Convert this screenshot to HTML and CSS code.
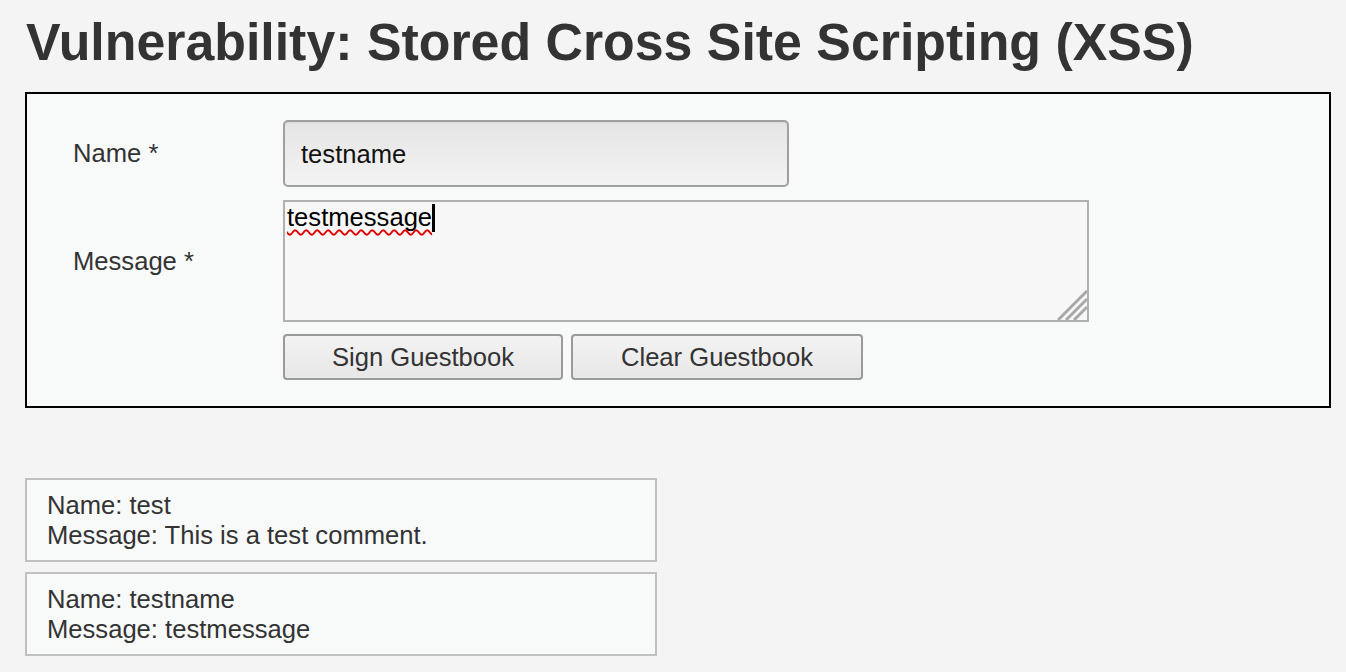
FILE: index.html
```html
<!DOCTYPE html>
<html lang="en">
<head>
<meta charset="utf-8">
<title>Vulnerability: Stored Cross Site Scripting (XSS)</title>
<link rel="stylesheet" href="styles.css">
</head>
<body>
<div class="page">
  <h1 class="title">Vulnerability: Stored Cross Site Scripting (XSS)</h1>
  <div class="code-area">
    <form class="guest-form">
      <label class="label">Name *</label>
      <div class="cell"><div class="text-input">testname</div></div>
      <label class="label">Message *</label>
      <div class="cell">
        <div class="textarea"><span class="typed">testmessage</span><span class="caret"></span>
          <svg class="grip" width="30" height="30" viewBox="0 0 30 30"><path d="M1 30 L30 1 M9 30 L30 9 M17 30 L30 17" stroke="#a8a8a8" stroke-width="3" fill="none"/></svg>
        </div>
      </div>
      <div></div>
      <div class="cell buttons">
        <button type="button" class="btn btn-sign">Sign Guestbook</button>
        <button type="button" class="btn btn-clear">Clear Guestbook</button>
      </div>
    </form>
  </div>
  <div class="entries">
    <div class="entry">Name: test<br>Message: This is a test comment.</div>
    <div class="entry">Name: testname<br>Message: testmessage</div>
  </div>
</div>
</body>
</html>
```
FILE: styles.css
```css
html, body {
  margin: 0;
  padding: 0;
  background: #f4f4f4;
}
body {
  font-family: "Liberation Sans", Arial, sans-serif;
  color: #333;
  font-size: 25.6px;
}
.page {
  padding: 12px 15px 0 25px;
}
.title {
  margin: 0 0 20px 0;
  font-size: 51.85px;
  line-height: 60px;
  font-weight: bold;
  color: #333;
  padding-left: 1px;
}
.code-area {
  border: 2px solid #000;
  background: #f8f9f9;
  padding: 26px 0 26px 46px;
}
.guest-form {
  display: grid;
  grid-template-columns: 210px auto;
  align-items: center;
  row-gap: 13px;
}
.label {
  font-size: 25.6px;
  color: #333;
}
.cell {
  display: flex;
}
.text-input {
  box-sizing: border-box;
  width: 506px;
  height: 67px;
  border: 2px solid #a0a0a0;
  border-radius: 5px;
  background: linear-gradient(to bottom, #e5e5e5, #f3f3f3);
  color: #111;
  padding: 1px 16px 0 16px;
  display: flex;
  align-items: center;
  box-shadow: inset 0 1px 2px rgba(0,0,0,0.06);
}
.textarea {
  position: relative;
  box-sizing: border-box;
  width: 806px;
  height: 122px;
  border: 2px solid #b0b0b0;
  background: #f7f7f7;
  color: #000;
  padding: 1px 2px;
  line-height: 29px;
}
.typed {
  text-decoration: underline wavy #e00000;
  text-decoration-skip-ink: none;
  text-underline-offset: 3px;
  text-decoration-thickness: 1.5px;
}
.caret {
  display: inline-block;
  width: 3px;
  height: 28px;
  background: #000;
  vertical-align: -6px;
}
.grip {
  position: absolute;
  right: 0;
  bottom: 0;
  display: block;
}
.buttons {
  gap: 8px;
  margin-top: -1px;
}
.btn {
  box-sizing: border-box;
  height: 46px;
  padding: 0;
  text-align: center;
  font-family: "Liberation Sans", Arial, sans-serif;
  font-size: 25.6px;
  color: #333;
  border: 2px solid #9a9a9a;
  border-radius: 4px;
  background: linear-gradient(to bottom, #f3f3f3, #e7e7e7);
  cursor: pointer;
}
.btn-sign {
  width: 280px;
}
.btn-clear {
  width: 292px;
}
.entries {
  margin-top: 70px;
  display: flex;
  flex-direction: column;
  gap: 10px;
}
.entry {
  box-sizing: border-box;
  width: 632px;
  border: 2px solid #c0c0c0;
  background: #f8f9f9;
  padding: 10px 20px 10px 20px;
  line-height: 30px;
  color: #333;
}
```
